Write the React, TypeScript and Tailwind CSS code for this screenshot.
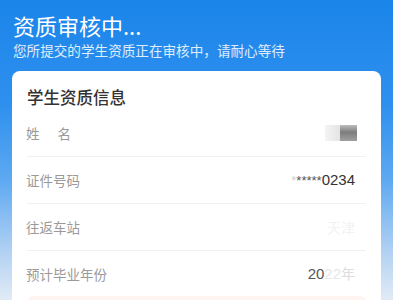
import React from "react";

const cjk = '"Noto Sans CJK SC", "Noto Sans", sans-serif';

function Row({
  label,
  children,
  last,
}: {
  label: React.ReactNode;
  children?: React.ReactNode;
  last?: boolean;
}) {
  return (
    <div
      className={[
        "flex h-[46px] items-center justify-between",
        last ? "" : "border-b border-[#f0f0f0] box-content",
      ].join(" ")}
    >
      <div className="ml-[-1px] text-[13.5px] text-[#9a9a9a]">{label}</div>
      <div className="pr-[11px] flex items-center">{children}</div>
    </div>
  );
}

export default function App() {
  return (
    <div
      className="h-[300px] w-full overflow-hidden bg-[linear-gradient(180deg,#1b85ea_0%,#2e90ee_35%,#5ea9f1_60%,#b5d3f3_85%,#e1ebf5_100%)]"
      style={{ fontFamily: cjk }}
    >
      <div className="px-[13px] pt-[11px]">
        <h1 className="text-[22px] leading-[28px] text-white">资质审核中...</h1>
        <p className="mt-[2px] text-[13.6px] leading-[18px] text-white/85">
          您所提交的学生资质正在审核中，请耐心等待
        </p>
      </div>

      <div className="mx-[12px] mt-[12px] rounded-t-[8px] bg-white px-[15px] pt-[13px]">
        <div className="h-[26px] text-[16.5px] leading-[26px] font-medium text-[#333]">
          学生资质信息
        </div>

        <Row
          label={
            <span className="flex gap-[18px]">
              <span>姓</span>
              <span>名</span>
            </span>
          }
        >
          <div className="flex h-[16px] w-[32px] mr-[-2px]">
            <div className="h-full w-[15px] bg-[linear-gradient(90deg,#f4f4f4,#e4e4e4)]" />
            <div className="h-full w-[17px] bg-[linear-gradient(180deg,#bdbdbd,#7d7d7d_45%,#a0a0a0)]" />
          </div>
        </Row>

        <Row label="证件号码">
          <span
            className="text-[15px] text-[#333]"
            style={{ fontFamily: '"Liberation Sans", Arial, sans-serif' }}
          >
            <span className="text-[13px] text-[#cfcfcf]">*</span>
            <span className="text-[13px] text-[#555]">*****</span>0234
          </span>
        </Row>

        <Row label="往返车站">
          <span className="text-[14px] text-[#f2f2f2]">天津</span>
        </Row>

        <Row label="预计毕业年份" last>
          <span
            className="text-[15px]"
            style={{ fontFamily: '"Liberation Sans", Arial, sans-serif' }}
          >
            <span className="text-[#555]">20</span>
            <span className="text-[#e6e6e6]">22</span>
            <span className="text-[14px] text-[#dddddd]" style={{ fontFamily: cjk }}>
              年
            </span>
          </span>
        </Row>

        <div className="mt-[-1px] h-[20px] rounded-t-[6px] bg-[#fff4ef]" />
      </div>
    </div>
  );
}
